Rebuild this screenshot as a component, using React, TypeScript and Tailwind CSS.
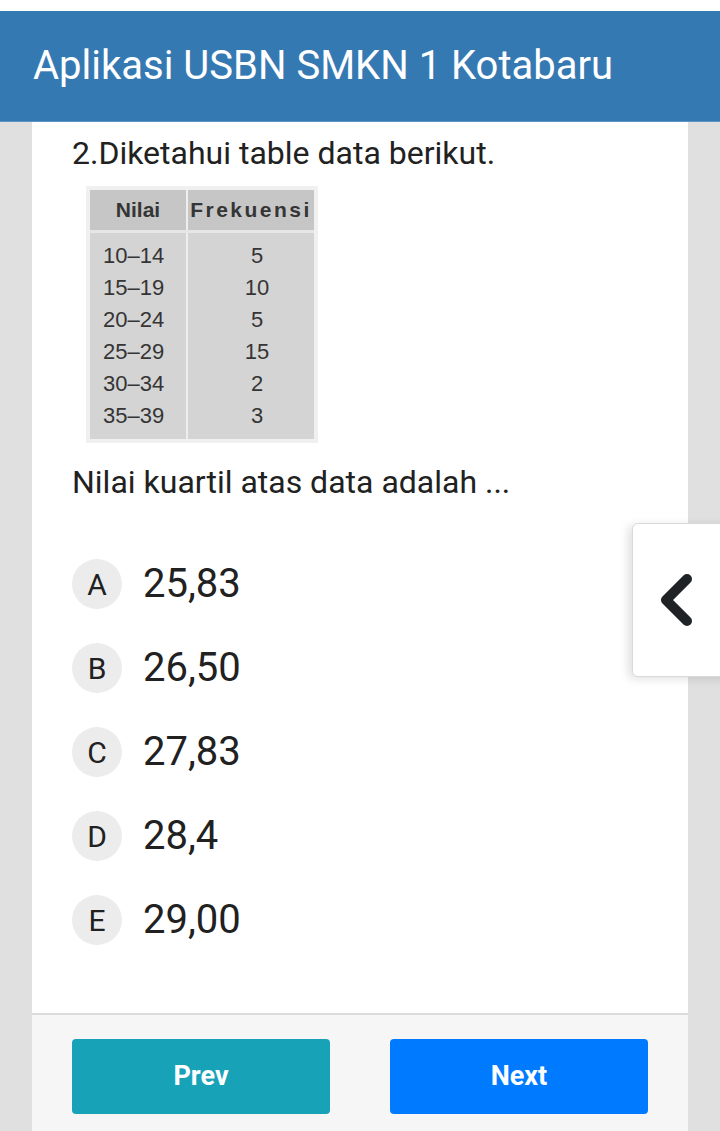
import { useState } from 'react';

const rows = [
  ['10–14', '5'],
  ['15–19', '10'],
  ['20–24', '5'],
  ['25–29', '15'],
  ['30–34', '2'],
  ['35–39', '3'],
];

const options = [
  { key: 'A', value: '25,83' },
  { key: 'B', value: '26,50' },
  { key: 'C', value: '27,83' },
  { key: 'D', value: '28,4' },
  { key: 'E', value: '29,00' },
];

function DataTable() {
  return (
    <div className="ml-[14px] mt-[13px] w-[232px] bg-[#f0f0f0] p-[4px] [font-family:'Liberation_Sans',Arial,sans-serif] text-[#353535]">
      <div className="flex">
        <div className="w-[96px] bg-[#c6c6c6] h-[40px] flex items-center justify-center text-[21px] font-bold">Nilai</div>
        <div className="w-[2px] bg-[#eeeeee]" />
        <div className="flex-1 bg-[#c6c6c6] h-[40px] flex items-center justify-center text-[21px] font-bold tracking-[2.5px]">Frekuensi</div>
      </div>
      <div className="flex h-[3px]">
        <div className="w-full bg-[#e6e6e6]" />
      </div>
      <div className="flex">
        <div className="w-[96px] bg-[#d4d4d4] pt-[7px] pb-[7px]">
          {rows.map(([n]) => (
            <div key={n} className="h-[32px] leading-[32px] pl-[13px] text-[22px]">{n}</div>
          ))}
        </div>
        <div className="w-[2px] bg-[#eeeeee]" />
        <div className="flex-1 bg-[#d4d4d4] pt-[7px] pb-[7px]">
          {rows.map(([n, f]) => (
            <div key={n} className="h-[32px] leading-[32px] pl-[48px] text-[22px] w-[90px] text-center">{f}</div>
          ))}
        </div>
      </div>
    </div>
  );
}

export default function App() {
  const [selected, setSelected] = useState<string | null>(null);

  return (
    <div className="relative min-h-[1131px] bg-[#e0e0e0] [font-family:Roboto,'Noto_Sans',sans-serif] text-[#212121]">
      {/* Header */}
      <div className="bg-white pt-[11px]">
        <div className="bg-[#3579b3] h-[111px] flex items-center pl-[33px] border-b border-[#5c95c6]">
          <h1 className="text-white text-[40px] leading-none">Aplikasi USBN SMKN 1 Kotabaru</h1>
        </div>
      </div>

      {/* Card */}
      <div className="mx-[32px] bg-white">
        <div className="pl-[40px] pr-[40px] pt-[11px] pb-[68px]">
          <p className="text-[32px] leading-[40px]">2.Diketahui table data berikut.</p>
          <DataTable />
          <p className="text-[32px] leading-[40px] mt-[19px]">Nilai kuartil atas data adalah ...</p>

          <div className="mt-[57px] flex flex-col gap-[34px]">
            {options.map((o) => (
              <button
                key={o.key}
                onClick={() => setSelected(o.key)}
                className="flex items-center text-left"
              >
                <span
                  className={
                    selected === o.key
                      ? 'w-[50px] h-[50px] rounded-full bg-[#3579b3] text-white flex items-center justify-center text-[30px]'
                      : 'w-[50px] h-[50px] rounded-full bg-[#ececec] flex items-center justify-center text-[30px]'
                  }
                >
                  {o.key}
                </span>
                <span className="ml-[21px] text-[40px] leading-none">{o.value}</span>
              </button>
            ))}
          </div>
        </div>

        {/* Footer */}
        <div className="border-t-2 border-[#dcdcdc] bg-[#f6f6f6] px-[40px] pt-[24px] pb-[24px] flex gap-[60px]">
          <button className="flex-1 h-[75px] rounded-[4px] bg-[#17a2b8] text-white text-[27px] font-bold">Prev</button>
          <button className="flex-1 h-[75px] rounded-[4px] bg-[#007bff] text-white text-[27px] font-bold">Next</button>
        </div>
      </div>

      {/* Side toggle */}
      <div className="absolute left-[632px] top-[523px] w-[100px] h-[154px] bg-white rounded-l-[6px] border border-[#d9d9d9] shadow-[-4px_2px_10px_rgba(0,0,0,0.12)] flex items-center pl-[25px]">
        <svg width="36" height="56" viewBox="0 0 36 56">
          <path d="M29 7 L8 28 L29 49" fill="none" stroke="#1f2326" strokeWidth="10" strokeLinecap="round" strokeLinejoin="round" />
        </svg>
      </div>
    </div>
  );
}
